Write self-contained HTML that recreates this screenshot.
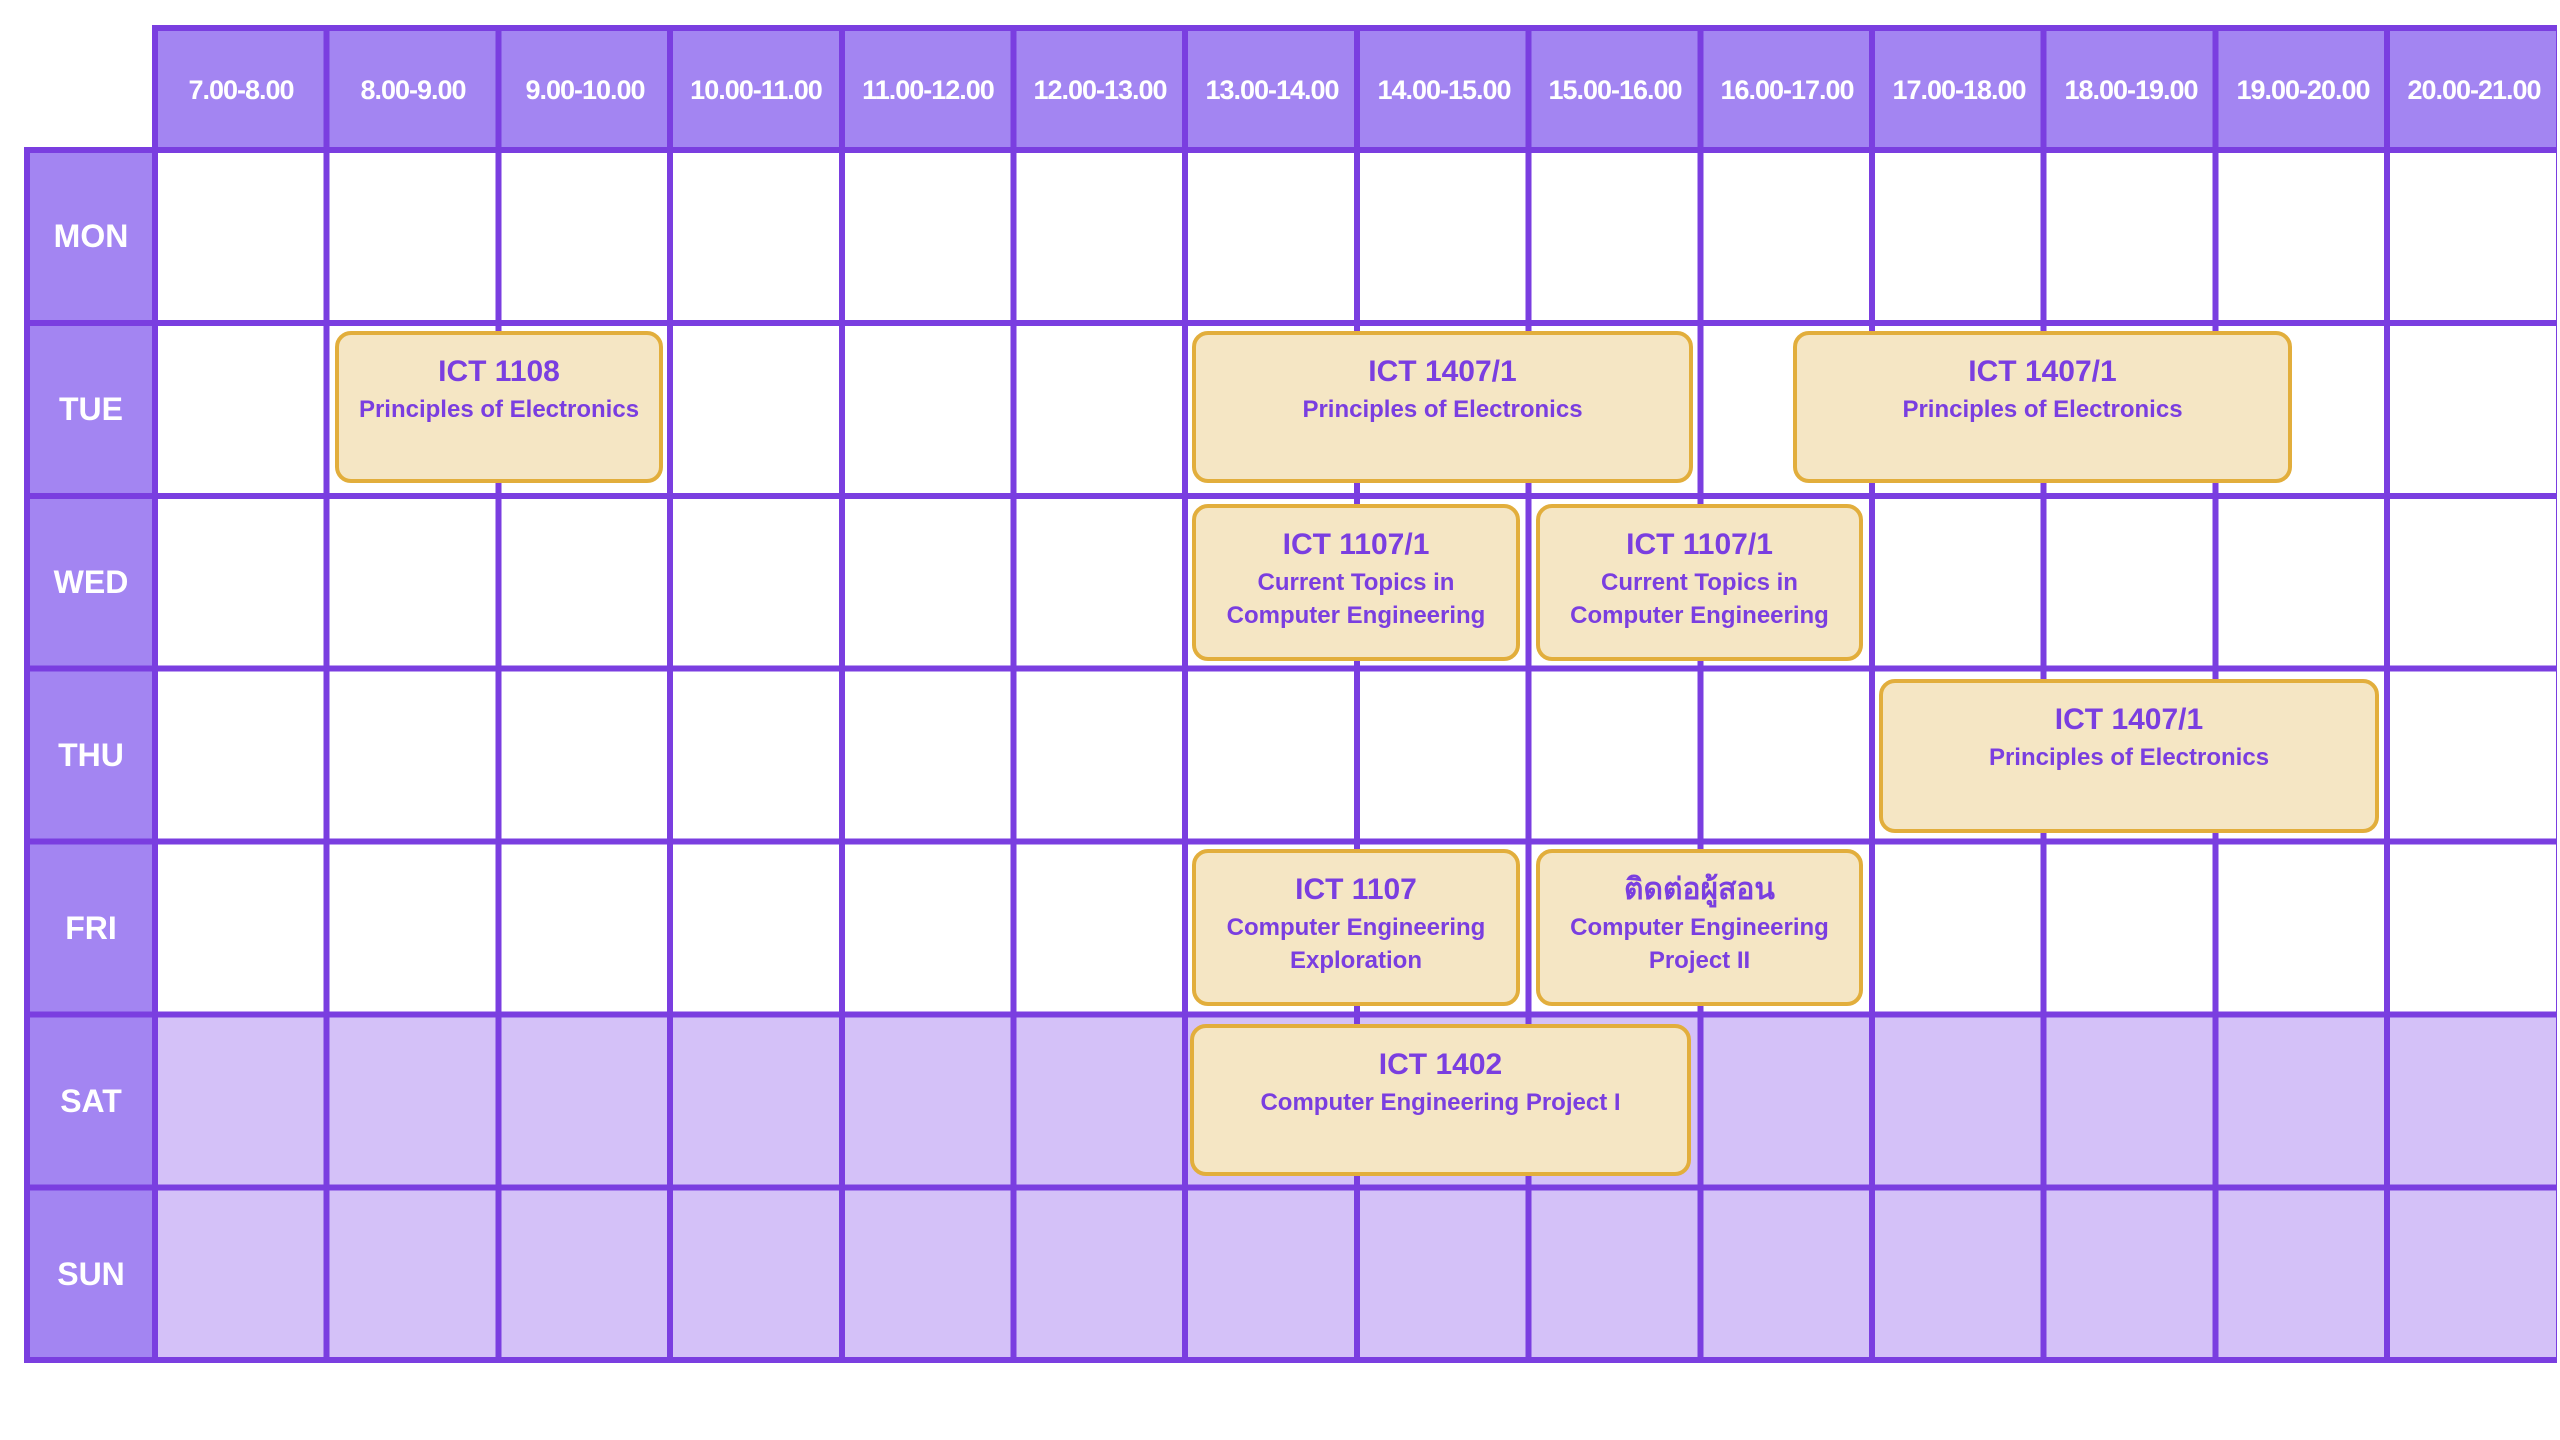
<!DOCTYPE html>
<html><head><meta charset="utf-8"><style>
*{margin:0;padding:0;box-sizing:border-box}
body{width:2560px;height:1440px;background:#fff;position:relative;overflow:hidden;font-family:"Liberation Sans","Noto Sans CJK SC",sans-serif;font-weight:bold}
.a{position:absolute}
.hdr{left:155px;top:28px;width:2402px;height:122px;background:#a385f2}
.day{left:27px;top:150px;width:128px;height:1210px;background:#a385f2}
.wk{left:155px;top:1015px;width:2402px;height:345px;background:#d4c1f8}
.hl{position:absolute;height:6px;background:#7a3ee0}
.ht{position:absolute;top:70px;width:172px;text-align:center;color:#fff;font-size:27px;line-height:40px;letter-spacing:-1px}
.dt{position:absolute;left:27px;width:128px;text-align:center;color:#fff;font-size:32px;line-height:40px}
.ev{position:absolute;background:#f5e6c4;border:4px solid #e2ae3c;border-radius:16px;text-align:center;color:#7a3ee0;padding-top:18px}
.ev b{display:block;font-size:30px;line-height:38px}
.ev span{display:block;font-size:24px;line-height:33px;margin-top:2px}
</style></head><body>
<div class="a hdr"></div><div class="a day"></div><div class="a wk"></div>
<div class="a" style="left:152px;top:28px;width:2408px;height:1335px;background:repeating-linear-gradient(90deg,#7a3ee0 0 6px,transparent 6px 171.7px)"></div>
<div class="a" style="left:0;top:150px;width:152px;height:1213px;background:linear-gradient(90deg,transparent 0 24px,#7a3ee0 24px 30px,transparent 30px)"></div>
<div class="hl" style="left:152px;top:25px;width:2408px"></div>
<div class="a" style="left:24px;top:147px;width:2536px;height:1216px;background:repeating-linear-gradient(180deg,#7a3ee0 0 6px,transparent 6px 172.9px)"></div>
<div class="hl" style="left:24px;top:1357px;width:2536px"></div>
<div class="a" style="left:2557px;top:0;width:3px;height:1440px;background:#fff"></div>

<div class="ht" style="left:155px">7.00-8.00</div>
<div class="ht" style="left:327px">8.00-9.00</div>
<div class="ht" style="left:499px">9.00-10.00</div>
<div class="ht" style="left:670px">10.00-11.00</div>
<div class="ht" style="left:842px">11.00-12.00</div>
<div class="ht" style="left:1014px">12.00-13.00</div>
<div class="ht" style="left:1186px">13.00-14.00</div>
<div class="ht" style="left:1358px">14.00-15.00</div>
<div class="ht" style="left:1529px">15.00-16.00</div>
<div class="ht" style="left:1701px">16.00-17.00</div>
<div class="ht" style="left:1873px">17.00-18.00</div>
<div class="ht" style="left:2045px">18.00-19.00</div>
<div class="ht" style="left:2217px">19.00-20.00</div>
<div class="ht" style="left:2388px">20.00-21.00</div>

<div class="dt" style="top:216px">MON</div>
<div class="dt" style="top:389px">TUE</div>
<div class="dt" style="top:562px">WED</div>
<div class="dt" style="top:735px">THU</div>
<div class="dt" style="top:908px">FRI</div>
<div class="dt" style="top:1081px">SAT</div>
<div class="dt" style="top:1254px">SUN</div>

<div class="ev" style="left:335px;top:331px;width:328px;height:152px"><b>ICT 1108</b><span>Principles of Electronics</span></div>
<div class="ev" style="left:1192px;top:331px;width:501px;height:152px"><b>ICT 1407/1</b><span>Principles of Electronics</span></div>
<div class="ev" style="left:1793px;top:331px;width:499px;height:152px"><b>ICT 1407/1</b><span>Principles of Electronics</span></div>
<div class="ev" style="left:1192px;top:504px;width:328px;height:157px"><b>ICT 1107/1</b><span>Current Topics in<br>Computer Engineering</span></div>
<div class="ev" style="left:1536px;top:504px;width:327px;height:157px"><b>ICT 1107/1</b><span>Current Topics in<br>Computer Engineering</span></div>
<div class="ev" style="left:1879px;top:679px;width:500px;height:154px"><b>ICT 1407/1</b><span>Principles of Electronics</span></div>
<div class="ev" style="left:1192px;top:849px;width:328px;height:157px"><b>ICT 1107</b><span>Computer Engineering<br>Exploration</span></div>
<div class="ev" style="left:1536px;top:849px;width:327px;height:157px"><b>ติดต่อผู้สอน</b><span>Computer Engineering<br>Project II</span></div>
<div class="ev" style="left:1190px;top:1024px;width:501px;height:152px"><b>ICT 1402</b><span>Computer Engineering Project I</span></div>
</body></html>
